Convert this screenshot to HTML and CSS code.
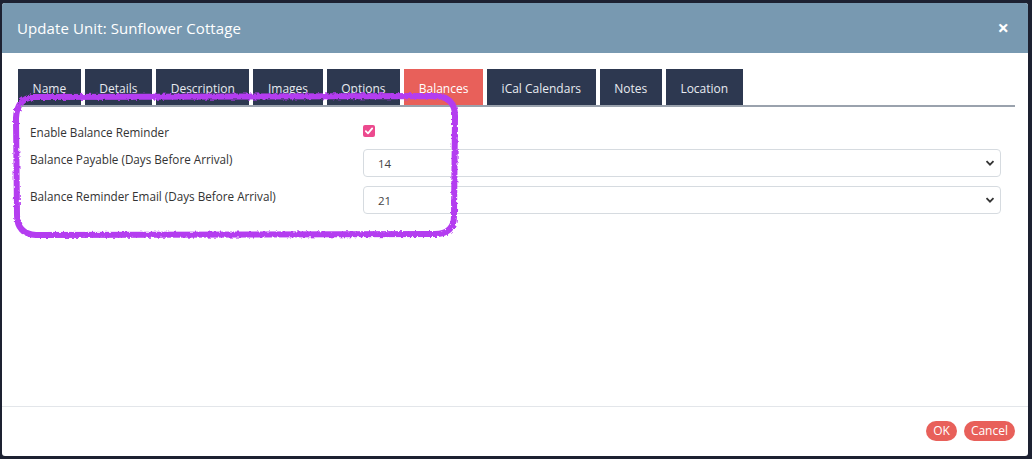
FILE: index.html
```html
<!DOCTYPE html>
<html>
<head>
<meta charset="utf-8">
<link rel="stylesheet" href="styles.css">
</head>
<body>
<div class="backdrop">
  <div class="modal">
    <div class="modal-header">
      <span class="modal-title">Update Unit: Sunflower Cottage</span>
      <span class="close">×</span>
    </div>
    <div class="modal-body">
      <div class="tabs">
        <div class="tab">Name</div>
        <div class="tab">Details</div>
        <div class="tab">Description</div>
        <div class="tab">Images</div>
        <div class="tab">Options</div>
        <div class="tab active">Balances</div>
        <div class="tab">iCal Calendars</div>
        <div class="tab">Notes</div>
        <div class="tab">Location</div>
      </div>
      <div class="form">
        <div class="label">Enable Balance Reminder</div>
        <div class="field check-field">
          <span class="checkbox">
            <svg viewBox="0 0 12 12" width="12" height="12"><path d="M2.8 6.2 L5 8.4 L9.2 3.4" fill="none" stroke="#fff" stroke-width="1.8" stroke-linecap="round" stroke-linejoin="round"/></svg>
          </span>
        </div>
        <div class="label select-label">Balance Payable (Days Before Arrival)</div>
        <div class="field">
          <div class="select"><span>14</span>
            <svg class="chev" viewBox="0 0 10 10" width="10" height="10"><path d="M1.5 3.2 L5 6.7 L8.5 3.2" fill="none" stroke="#333" stroke-width="1.8"/></svg>
          </div>
        </div>
        <div class="label select-label">Balance Reminder Email (Days Before Arrival)</div>
        <div class="field">
          <div class="select"><span>21</span>
            <svg class="chev" viewBox="0 0 10 10" width="10" height="10"><path d="M1.5 3.2 L5 6.7 L8.5 3.2" fill="none" stroke="#333" stroke-width="1.8"/></svg>
          </div>
        </div>
      </div>
    </div>
    <div class="modal-footer">
      <button class="btn">OK</button>
      <button class="btn">Cancel</button>
    </div>
  </div>
  <svg class="annotation" width="1032" height="459" viewBox="0 0 1032 459">
    <defs>
      <filter id="rough" x="-5%" y="-5%" width="110%" height="110%">
        <feTurbulence type="fractalNoise" baseFrequency="0.35" numOctaves="2" seed="3" result="n"/>
        <feDisplacementMap in="SourceGraphic" in2="n" scale="3.5"/>
      </filter>
    </defs>
    <path d="M34 97 L436 96 Q455 97 455 116 L454 216 Q454 234 435 234 L36 235 Q17 234 17 215 L16 118 Q17 98 34 97 Z" fill="none" stroke="#b43cf0" stroke-width="6" filter="url(#rough)" stroke-linejoin="round"/>
  </svg>
</div>
</body>
</html>
```

FILE: styles.css
```css
* { box-sizing: border-box; }
html, body { margin: 0; padding: 0; }
body {
  width: 1032px;
  height: 459px;
  background: #1d2131;
  font-family: "Open Sans", "DejaVu Sans", sans-serif;
  overflow: hidden;
}
.backdrop {
  position: relative;
  width: 1032px;
  height: 459px;
  padding: 3px 4px 3px 2px;
}
.modal {
  width: 1026px;
  height: 453px;
  background: #fff;
  border-radius: 3px;
  display: flex;
  flex-direction: column;
  overflow: hidden;
}
.modal-header {
  height: 50px;
  background: #7899b1;
  display: flex;
  align-items: center;
  justify-content: space-between;
  padding: 0 19px 0 15px;
  color: #fff;
}
.modal-title {
  font-size: 15px;
  letter-spacing: 0.1px;
}
.close {
  font-size: 20px;
  font-weight: bold;
  line-height: 1;
}
.modal-body {
  flex: 1;
  padding: 16px 13px 0 16px;
}
.tabs {
  display: flex;
  gap: 4px;
  border-bottom: 2px solid #9aa2ad;
}
.tab {
  height: 36px;
  padding: 11px 14.6px 0;
  background: #2d3850;
  color: #e8ebf0;
  font-size: 12px;
}
.tab.active {
  background: #e8605a;
  color: #fff;
}
.form {
  display: grid;
  grid-template-columns: 333px 1fr;
  row-gap: 9px;
  padding: 16px 14px 0 12px;
  color: #333;
  font-size: 11.7px;
}
.label { padding-top: 1px; }
.select-label { padding-top: 2px; }
.check-field { height: 17px; padding-top: 1px; }
.checkbox {
  display: inline-flex;
  width: 12px;
  height: 12px;
  border-radius: 2px;
  background: #ec4a8e;
  align-items: center;
  justify-content: center;
}
.checkbox svg { display: block; }
.select {
  height: 28px;
  border: 1px solid #d6dbe0;
  border-radius: 4px;
  display: flex;
  align-items: center;
  justify-content: space-between;
  padding: 0 5px 0 14px;
  font-size: 11.5px;
  color: #444;
}
.chev { display: block; }
.modal-footer {
  height: 50px;
  border-top: 1px solid #e3e6ea;
  display: flex;
  justify-content: flex-end;
  align-items: center;
  gap: 7px;
  padding: 0 13px 2px 0;
}
.btn {
  height: 20px;
  border: none;
  border-radius: 10px;
  background: #e8605a;
  color: #fff;
  font-family: "Open Sans", "DejaVu Sans", sans-serif;
  font-size: 12px;
  padding: 0 7px;
  line-height: 20px;
}
.annotation {
  position: absolute;
  left: 0;
  top: 0;
  pointer-events: none;
}
```
